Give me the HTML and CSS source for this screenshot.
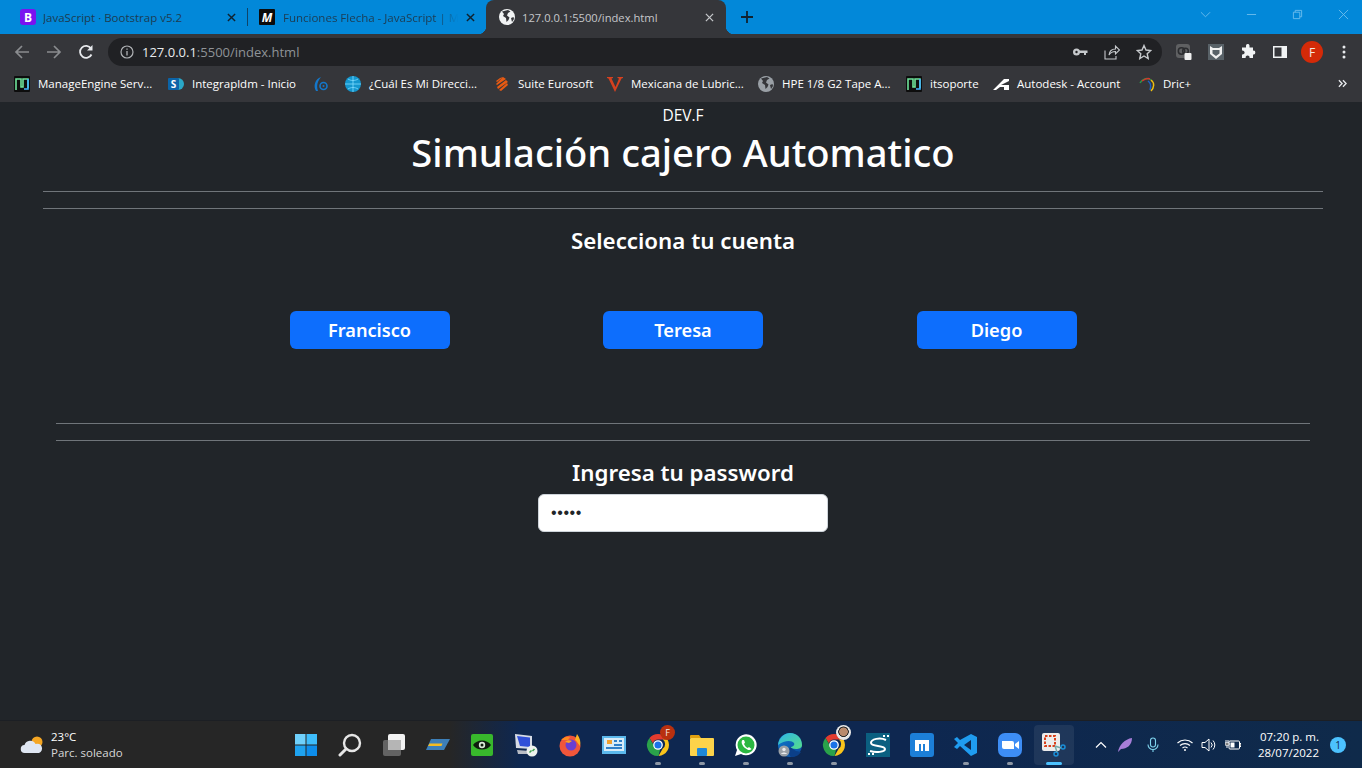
FILE: index.html
```html
<!DOCTYPE html>
<html lang="es">
<head>
<meta charset="utf-8">
<title>127.0.0.1:5500/index.html</title>
<link rel="stylesheet" href="styles.css">
</head>
<body>
<svg class="defs" width="0" height="0">
  <defs>
    <linearGradient id="edge-a" x1="0" y1="0" x2="1" y2="1"><stop offset="0" stop-color="#2fb5e8"/><stop offset="1" stop-color="#55dd8a"/></linearGradient>
    <linearGradient id="edge-b" x1="0" y1="0" x2="1" y2="1"><stop offset="0" stop-color="#0f7ad0"/><stop offset="1" stop-color="#0b4a9a"/></linearGradient>
  </defs>
  <symbol id="globe" viewBox="0 0 16 16"><circle cx="8" cy="8" r="8" fill="currentColor"/><path d="M3 2.500 5 5l-1 2 3 2 .5 4 2-2 1-2.500L8 6.500 9 4l2.500-1.500L9 1zM12 9l2.500-1L15 10l-2 3z" fill="#35363a"/></symbol>
  <symbol id="sn" viewBox="0 0 16 16"><rect width="16" height="16" rx="1" fill="#0d0d0d"/><path d="M2 14V3h5v8h2V3h5v9" fill="none" stroke="#6fe39a" stroke-width="1.600"/><path d="M14 3v10h-4" fill="none" stroke="#44b4ff" stroke-width="1.600"/></symbol>
  <symbol id="chrome" viewBox="0 0 24 24"><path d="M12 1a11 11 0 0 1 9.500 5.500H12a5.500 5.500 0 0 0-5.200 3.800L3.500 5A11 11 0 0 1 12 1z" fill="#e33b2e"/><path d="M21.500 6.500A11 11 0 0 1 12.500 23l4.300-7.500a5.500 5.500 0 0 0 0-9z" fill="#f9c41b"/><path d="M12.500 23A11 11 0 0 1 3.500 5l4 7a5.500 5.500 0 0 0 6.800 3.500z" fill="#2aa24a"/><circle cx="12" cy="12" r="4.200" fill="#1a73e8" stroke="#fff" stroke-width="1.300"/></symbol>
</svg>

<header class="browser">
  <div class="tabstrip">
    <div class="tab">
      <svg class="fav" viewBox="0 0 16 16"><rect width="16" height="16" rx="3" fill="#7a12f0"/><text x="8" y="12.500" class="fav-b">B</text></svg>
      <span class="tab-title">JavaScript · Bootstrap v5.2</span>
      <svg class="tab-x" viewBox="0 0 10 10"><path d="M1 1l8 8M9 1l-8 8" stroke="currentColor" stroke-width="1.600"/></svg>
    </div>
    <div class="tab tab-sep">
      <svg class="fav" viewBox="0 0 16 16"><rect width="16" height="16" rx="1" fill="#0b0b0b"/><text x="8" y="12.500" class="fav-m">M</text></svg>
      <span class="tab-title tab-fade">Funciones Flecha - JavaScript | MDN</span>
      <svg class="tab-x" viewBox="0 0 10 10"><path d="M1 1l8 8M9 1l-8 8" stroke="currentColor" stroke-width="1.600"/></svg>
    </div>
    <div class="tab tab-active">
      <svg class="fav" viewBox="0 0 16 16"><use href="#globe"/></svg>
      <span class="tab-title">127.0.0.1:5500/index.html</span>
      <svg class="tab-x" viewBox="0 0 10 10"><path d="M1 1l8 8M9 1l-8 8" stroke="currentColor" stroke-width="1.400"/></svg>
    </div>
    <svg class="new-tab" viewBox="0 0 12 12"><path d="M6 0v12M0 6h12" stroke="#10222f" stroke-width="1.800"/></svg>
    <div class="win-controls">
      <svg viewBox="0 0 12 12"><path d="M1 3.500l5 5 5-5" fill="none" stroke="currentColor"/></svg>
      <svg viewBox="0 0 12 12"><path d="M1 6h10" stroke="currentColor"/></svg>
      <svg viewBox="0 0 12 12"><path d="M1.500 3.500h7v7h-7zM3.500 3.500v-2h7v7h-2" fill="none" stroke="currentColor"/></svg>
      <svg viewBox="0 0 12 12"><path d="M1 1l10 10M11 1L1 11" stroke="currentColor"/></svg>
    </div>
  </div>

  <div class="toolbar">
    <svg class="nav dim" viewBox="0 0 16 16"><path d="M15 8H2M8 2 2 8l6 6" fill="none" stroke="currentColor" stroke-width="1.700"/></svg>
    <svg class="nav dim" viewBox="0 0 16 16"><path d="M1 8h13M8 2l6 6-6 6" fill="none" stroke="currentColor" stroke-width="1.700"/></svg>
    <svg class="nav" viewBox="0 0 16 16"><path d="M13.500 10.500A6 6 0 1 1 13 4.500" fill="none" stroke="currentColor" stroke-width="1.800"/><path d="M14.500 1v5.500H9z" fill="currentColor"/></svg>
    <div class="omnibox">
      <svg class="info" viewBox="0 0 14 14"><circle cx="7" cy="7" r="6" fill="none" stroke="currentColor" stroke-width="1.200"/><path d="M7 6v4.500M7 3.500v1.300" stroke="currentColor" stroke-width="1.300"/></svg>
      <span class="url"><span class="url-host">127.0.0.1</span>:5500/index.html</span>
      <span class="spacer"></span>
      <svg class="omni-icon" viewBox="0 0 16 16"><circle cx="4.500" cy="8" r="3.500" fill="currentColor"/><path d="M7 6.500h8.500V9H14v2h-2V9H7z" fill="currentColor"/><circle cx="4.500" cy="8" r="1.200" fill="#202124"/></svg>
      <svg class="omni-icon" viewBox="0 0 16 16"><path d="M1 6.500V15h11v-3M5 11c.5-4 3-6 6.500-6V2L15.500 6l-4 4V7.500C9 7.500 6.500 8.500 5 11z" fill="none" stroke="currentColor" stroke-width="1.100"/></svg>
      <svg class="omni-icon" viewBox="0 0 16 16"><path d="M8 1.500l2 4.500 4.800.5-3.600 3.200 1 4.800L8 12l-4.200 2.500 1-4.800L1.200 6.500 6 6z" fill="none" stroke="currentColor" stroke-width="1.400"/></svg>
    </div>
    <div class="extensions">
      <svg class="ext" viewBox="0 0 16 16"><rect width="14" height="14" rx="3" fill="#5f6062"/><circle cx="5.500" cy="7" r="3.200" fill="none" stroke="#2b2c2f" stroke-width="1.500"/><circle cx="9.500" cy="7" r="2.800" fill="none" stroke="#2b2c2f" stroke-width="1.500"/><rect x="8.500" y="9" width="7" height="7" rx="1" fill="#f0f0f0"/></svg>
      <svg class="ext" viewBox="0 0 16 16"><rect width="16" height="16" fill="#596268"/><path d="M2 2l3 2h6l3-2v8l-6 5-6-5z" fill="#f1f1f1"/><path d="M4.500 6h7v3.500L8 12 4.500 9.500z" fill="#596268"/></svg>
      <svg class="ext" viewBox="0 0 16 16"><path d="M6 1.500a1.800 1.800 0 0 1 3.500 0V3.500H13v3.200a1.900 1.900 0 1 1 0 3.700V14H9.500a2 2 0 1 0-3.800 0H2v-3.600a2 2 0 1 0 0-3.800V3.500h4z" fill="#f1f3f4"/></svg>
      <svg class="ext" viewBox="0 0 16 16"><rect x="1" y="2" width="14" height="12" fill="#f1f3f4"/><rect x="2.500" y="3.500" width="7" height="9" fill="#35363a"/></svg>
      <span class="avatar">F</span>
      <svg class="ext" viewBox="0 0 16 16"><circle cx="8" cy="3" r="1.500" fill="#e8eaed"/><circle cx="8" cy="8" r="1.500" fill="#e8eaed"/><circle cx="8" cy="13" r="1.500" fill="#e8eaed"/></svg>
    </div>
  </div>

  <nav class="bookmarks">
    <a class="bm bm-1"><svg class="bm-icon" viewBox="0 0 16 16"><use href="#sn"/></svg>ManageEngine Serv...</a>
    <a class="bm bm-2"><svg class="bm-icon" viewBox="0 0 16 16"><circle cx="10" cy="8" r="6" fill="#2aa8c8"/><rect y="2" width="11" height="12" rx="1" fill="#0b64a8"/><text x="5.500" y="12" class="bm-s">S</text></svg>Integrapldm - Inicio</a>
    <a class="bm bm-3"><svg class="bm-icon" viewBox="0 0 16 16"><path d="M3 15C0 10 2 3 8 1 5 5 3 9 5 15z" fill="#1477c9"/><circle cx="10.500" cy="10" r="3.500" fill="none" stroke="#1477c9" stroke-width="1.600"/><circle cx="10.500" cy="10" r="1" fill="#1477c9"/></svg></a>
    <a class="bm bm-4"><svg class="bm-icon" viewBox="0 0 16 16"><circle cx="8" cy="8" r="8" fill="#1497cf"/><path d="M8 0v16M0 8h16M3 3c3 2 7 2 10 0M3 13c3-2 7-2 10 0" stroke="#7fdcff" fill="none" stroke-width=".8"/></svg>¿Cuál Es Mi Direcci...</a>
    <a class="bm bm-5"><svg class="bm-icon" viewBox="0 0 16 16"><path d="M9 1l3 2-9 6-1-1zM12 4l2 2-10 7-1-2zM13 7l1 2-7 6-2-1zM6 2l3-1-6 5-1-1z" fill="#e85a12"/></svg>Suite Eurosoft</a>
    <a class="bm bm-6"><svg class="bm-icon" viewBox="0 0 16 16"><path d="M0 1h6v1L4.500 2.500 8.500 11 12 2.500 10.500 2V1H16v1l-1.500.5L8 16 1.500 2.500 0 2z" fill="#d6411f"/></svg>Mexicana de Lubric...</a>
    <a class="bm bm-7"><svg class="bm-icon globe-grey" viewBox="0 0 16 16"><use href="#globe"/></svg>HPE 1/8 G2 Tape A...</a>
    <a class="bm bm-8"><svg class="bm-icon" viewBox="0 0 16 16"><use href="#sn"/></svg>itsoporte</a>
    <a class="bm bm-9"><svg class="bm-icon" viewBox="0 0 16 16"><path d="M0 14 11 3h5v2L8 9h8v5h-5v-3H7l-4 3z" fill="#fff"/></svg>Autodesk - Account</a>
    <a class="bm bm-10"><svg class="bm-icon" viewBox="0 0 16 16"><path d="M1 7c2-4 7-6 11-3" fill="none" stroke="#2a9a4a" stroke-width="1.500"/><path d="M3 5c3-2 6-3 8-2" fill="none" stroke="#d8342c" stroke-width="1.500"/><path d="M12 4c4 3 3 8 0 11" fill="none" stroke="#f0c010" stroke-width="1.500"/><path d="M9 5c3 2 3 6 2 9" fill="none" stroke="#1a60c8" stroke-width="1.500"/></svg>Dric+</a>
    <span class="spacer"></span>
    <svg class="bm-more" viewBox="0 0 10 10"><path d="M1 1.500L4.500 5 1 8.500M5.500 1.500L9 5 5.500 8.500" fill="none" stroke="#e8eaed" stroke-width="1.500"/></svg>
  </nav>
</header>

<main class="page">
  <p class="brand">DEV.F</p>
  <h1 class="title">Simulación cajero Automatico</h1>
  <hr class="rule rule-wide rule-first">
  <hr class="rule rule-wide rule-second">
  <h2 class="heading heading-account">Selecciona tu cuenta</h2>
  <div class="accounts">
    <button class="account" type="button">Francisco</button>
    <button class="account" type="button">Teresa</button>
    <button class="account" type="button">Diego</button>
  </div>
  <hr class="rule rule-narrow rule-third">
  <hr class="rule rule-narrow rule-second">
  <h2 class="heading heading-pass">Ingresa tu password</h2>
  <input class="password" type="password" value="12345" aria-label="password">
</main>

<footer class="taskbar">
  <div class="weather">
    <svg class="weather-icon" viewBox="0 0 24 20"><circle cx="17" cy="7" r="5.500" fill="#f5a623"/><path d="M5 18a4 4 0 0 1-.5-8A6 6 0 0 1 15.500 9 4.500 4.500 0 0 1 19 18z" fill="#dfe6f2"/></svg>
    <div class="weather-text"><span class="temp">23°C</span><span class="cond">Parc. soleado</span></div>
  </div>
  <div class="apps">
    <span class="app"><svg viewBox="0 0 24 24"><path d="M1 1h10.500v10.500H1z" fill="#6fd0fb"/><path d="M12.500 1H23v10.500H12.500z" fill="#3ebdfb"/><path d="M1 12.500h10.500V23H1z" fill="#1fa3f0"/><path d="M12.500 12.500H23V23H12.500z" fill="#0d8deb"/></svg></span>
    <span class="app"><svg viewBox="0 0 24 24"><circle cx="14" cy="10" r="8" fill="none" stroke="#e6e6e6" stroke-width="2.400"/><path d="M8 16l-6 6" stroke="#e6e6e6" stroke-width="3" stroke-linecap="round"/></svg></span>
    <span class="app"><svg viewBox="0 0 24 24"><rect x="6" y="1" width="17" height="16" rx="2" fill="#f2f2f2"/><rect x="1" y="7" width="18" height="16" rx="2" fill="#6a6a6a" fill-opacity=".9"/><rect x="6" y="7" width="13" height="10" fill="#b5b5b5"/></svg></span>
    <span class="app"><svg viewBox="0 0 24 24"><path d="M5 6h19l-6 11H0z" fill="#3d7fb8"/><path d="M3.500 10.500h13l-1 2.500H2z" fill="#f5bc20"/></svg></span>
    <span class="app"><svg viewBox="0 0 24 24"><rect x="1" y="1" width="22" height="22" rx="2" fill="#38b82c"/><path d="M3 12c4-6 14-6 18 0-4 6-14 6-18 0z" fill="#0e1a0e"/><circle cx="12" cy="12" r="3.200" fill="#d8e8d8"/><circle cx="12" cy="12" r="1.500" fill="#0e1a0e"/></svg></span>
    <span class="app"><svg viewBox="0 0 24 24"><path d="M1 1l17 2v13L2 15z" fill="#d6dbe6"/><path d="M3 3l13 1.500v9.500L6 13z" fill="#2f4fd8"/><path d="M3 17l13 1v3H4z" fill="#b8bcc4"/><circle cx="18" cy="18" r="5.500" fill="#eef2ee"/><path d="M15.500 19.500l2-2M18.500 18l2-2" stroke="#3aa14a" stroke-width="1.500"/></svg></span>
    <span class="app"><svg viewBox="0 0 24 24"><circle cx="12" cy="13" r="10.500" fill="#f0563a"/><path d="M19 1c3 4 4 8 3 12-2-2-3-5-5-6z" fill="#ffb01f"/><path d="M3 7c3-3 6-4 9-3l-2 3z" fill="#ff8a1f"/><circle cx="13" cy="12" r="5.500" fill="#6a3fd0"/><path d="M7 9c2-2 5-2 7-1l-3 2z" fill="#ffa01f"/></svg></span>
    <span class="app"><svg viewBox="0 0 24 24"><rect y="3" width="24" height="18" fill="#5bb8ec"/><rect x="2" y="5" width="20" height="13" fill="#d8ecf8"/><path d="M5 7h5v4H5z" fill="#f0a030"/><path d="M12 7h3v2h-3zM17 7h3v2h-3zM12 11h8v2h-8zM4 14h16v2H4z" fill="#3080c8"/></svg></span>
    <span class="app has-pill"><svg viewBox="0 0 24 24"><use href="#chrome"/></svg><span class="app-badge">F</span></span>
    <span class="app has-pill"><svg viewBox="0 0 24 24"><path d="M0 3a1 1 0 0 1 1-1h8l2 3h-11z" fill="#e0a010"/><rect y="5" width="24" height="18" rx="1" fill="#fcd34a"/><rect x="7" y="15" width="10" height="8" rx="1" fill="#1e88d8"/></svg></span>
    <span class="app has-pill"><svg viewBox="0 0 24 24"><path d="M1 23l2-6a10.500 10.500 0 1 1 4 4z" fill="#fff"/><circle cx="12" cy="12" r="8.500" fill="#2bb741"/><path d="M8.500 7c-2 2 0 6 2.500 8s5 3 6.500 1l-2.500-2-1.300 1c-2-1-3-2.500-3.700-4L11 9.500 10 7z" fill="#fff"/></svg></span>
    <span class="app has-pill"><svg viewBox="0 0 24 24"><circle cx="12" cy="12" r="12" fill="url(#edge-b)"/><path d="M0 12C1 4 7 0 12 0c7 0 12 5 12 12 0 3-3 4-6 4-3 0-5-1-6-2 3 0 5-2 4-4-2-3-10-3-16 2z" fill="url(#edge-a)"/><path d="M13 24c-2-2-3-6-1-10l6 4 5 1c-2 3-5 5-10 5z" fill="#0b3f88"/><circle cx="6" cy="18" r="5.500" fill="#9aa0a6"/><circle cx="6" cy="16.500" r="1.700" fill="#e8eaed"/><path d="M3 21c1-2 5-2 6 0z" fill="#e8eaed"/></svg></span>
    <span class="app has-pill"><svg viewBox="0 0 24 24"><use href="#chrome"/></svg><span class="app-photo"></span></span>
    <span class="app"><svg viewBox="0 0 24 24"><rect width="24" height="24" fill="#0b5f80"/><path d="M20 7C14 4 5 6 5 10c0 4 14 2 14 6 0 3-9 4-15 2" fill="none" stroke="#fff" stroke-width="2"/><path d="M17 2h2v2h-2zM21 2h2v2h-2zM2 20h2v2H2zM6 20h2v2H6z" fill="#fff"/></svg></span>
    <span class="app"><svg viewBox="0 0 24 24"><rect width="24" height="24" rx="3" fill="#1c7fd8"/><path d="M5 18V7h14v11h-4v-7h-2v7h-2v-7H9v7z" fill="#fff"/></svg></span>
    <span class="app has-pill"><svg viewBox="0 0 24 24"><path d="M17 1l6 3v16l-6 3L6 13l-3 3-3-2 4-4-4-4 3-2 3 3z" fill="#1f9cf0"/><path d="M17 7v10l-7-5z" fill="#0e2a52"/></svg></span>
    <span class="app has-pill"><svg viewBox="0 0 24 24"><rect width="24" height="24" rx="7" fill="#3d8df5"/><path d="M4 8h10a2 2 0 0 1 2 2v6H6a2 2 0 0 1-2-2z" fill="#fff"/><path d="M17 11l4-3v8l-4-3z" fill="#fff"/></svg></span>
    <span class="app app-active"><svg viewBox="0 0 24 24"><rect width="18" height="18" rx="2" fill="#ececec"/><path d="M3 3h10v10H3z" fill="none" stroke="#d8401c" stroke-width="2" stroke-dasharray="2.500 1.500"/><circle cx="21" cy="14" r="2" fill="none" stroke="#1a8fd8" stroke-width="1.500"/><circle cx="14" cy="21" r="2" fill="none" stroke="#1a8fd8" stroke-width="1.500"/><path d="M13 13l6 2M13 13l2 6" stroke="#7aa" stroke-width="1.500"/></svg></span>
  </div>
  <div class="tray">
    <svg class="tray-chev" viewBox="0 0 12 12"><path d="M1 8.500L6 3.500l5 5" fill="none" stroke="#fff" stroke-width="1.200"/></svg>
    <svg class="tray-icon tray-feather" viewBox="0 0 16 16"><path d="M1 15C2 8 8 2 15 1c0 7-5 11-11 11z" fill="#a77ed8"/></svg>
    <svg class="tray-icon tray-mic" viewBox="0 0 16 16"><rect x="5.500" y="1" width="5" height="9" rx="2.500" fill="none" stroke="#7fd4ee" stroke-width="1.100"/><path d="M3 7.500a5 5 0 0 0 10 0M8 12.500V15" fill="none" stroke="#7fd4ee" stroke-width="1.100"/></svg>
    <svg class="tray-icon tray-wifi" viewBox="0 0 16 16"><path d="M.5 6a11 11 0 0 1 15 0M3 8.500a7.500 7.500 0 0 1 10 0M5.500 11a4 4 0 0 1 5 0" fill="none" stroke="#fff" stroke-width="1.100"/><circle cx="8" cy="13" r="1" fill="#fff"/></svg>
    <svg class="tray-icon tray-vol" viewBox="0 0 16 16"><path d="M1 5.500h3L8 2v12l-4-3.500H1z" fill="none" stroke="#fff"/><path d="M10 5.500a3.500 3.500 0 0 1 0 5M12 3.500a6.500 6.500 0 0 1 0 9" fill="none" stroke="#fff"/></svg>
    <svg class="tray-icon tray-bat" viewBox="0 0 16 16"><rect x="4" y="4" width="10.500" height="8" rx="1" fill="none" stroke="#fff"/><rect x="5.500" y="5.500" width="4" height="5" fill="#fff"/><path d="M15 6.500h1v3h-1zM1 3v3M3 3v3M0 6h4v2H0zM2 8v3" stroke="#fff"/></svg>
    <div class="clock"><span>07:20 p. m.</span><span>28/07/2022</span></div>
    <span class="notif">1</span>
  </div>
</footer>
</body>
</html>
```
FILE: styles.css
```css
* { box-sizing: border-box; }
html, body { margin: 0; height: 100%; }
body {
  width: 1362px;
  height: 768px;
  overflow: hidden;
  display: flex;
  flex-direction: column;
  background: #212529;
  font-family: "Open Sans", "Noto Sans", sans-serif;
  color: #fff;
}
.defs { position: absolute; }
.spacer { flex: 1; }

/* browser chrome */
.browser { flex: none; height: 102px; background: #35363a; }
.tabstrip {
  height: 34px;
  display: flex;
  align-items: stretch;
  padding-left: 8px;
  background: #0288d9;
}
.tab {
  width: 239px;
  display: flex;
  align-items: center;
  padding: 0 4px 0 12px;
  color: #1d3c52;
  font-size: 11.500px;
  position: relative;
}
.tab-sep::before {
  content: "";
  position: absolute;
  left: 0;
  top: 8px;
  bottom: 8px;
  width: 1px;
  background: #0f4468;
}
.tab-active {
  width: 240px;
  padding-left: 13px;
  padding-right: 5px;
  font-size: 11.200px;
  background: #35363a;
  border-radius: 8px 8px 0 0;
  color: #c5c7ca;
}
.tab-active::before, .tab-active::after {
  content: "";
  position: absolute;
  bottom: 0;
  width: 8px;
  height: 8px;
}
.tab-active::before {
  left: -8px;
  background: radial-gradient(circle at 0 0, transparent 8px, #35363a 8.500px);
}
.tab-active::after {
  right: -8px;
  background: radial-gradient(circle at 100% 0, transparent 8px, #35363a 8.500px);
}
.fav { width: 16px; height: 16px; flex: none; margin-right: 7px; color: #f1f3f4; }
.tab-sep .fav { margin-right: 8px; }
.fav-b { font: 700 12px "Open Sans", sans-serif; fill: #fff; text-anchor: middle; }
.fav-m { font: italic 700 12px "Open Sans", sans-serif; fill: #fff; text-anchor: middle; }
.tab-title { flex: 1; white-space: nowrap; overflow: hidden; }
.tab-fade { mask-image: linear-gradient(to right, #000 88%, transparent); }
.tab-x { width: 9px; height: 9px; flex: none; margin: 0 7px 0 8px; color: #10222f; }
.tab-active .tab-x { color: #c5c7ca; }
.new-tab { width: 12px; height: 12px; align-self: center; margin-left: 15px; }
.win-controls {
  margin-left: auto;
  display: flex;
  align-items: center;
  gap: 35px;
  padding: 0 13px 6px 0;
  color: #6cbcec;
}
.win-controls svg { width: 11px; height: 11px; }

.toolbar {
  height: 32px;
  padding-top: 4px;
  display: flex;
  align-items: center;
  padding-left: 14px;
  gap: 16px;
}
.nav { width: 16px; height: 16px; flex: none; color: #e8eaed; }
.nav.dim { color: #8a8c8f; }
.omnibox {
  width: 1054px;
  height: 28px;
  margin-left: -2px;
  display: flex;
  align-items: center;
  background: #202124;
  border-radius: 14px;
  padding: 0 10px 0 12px;
  color: #9aa0a6;
}
.info { width: 14px; height: 14px; margin-right: 8px; color: #b0b3b6; }
.url { font-size: 13px; color: #8f9397; }
.url-host { color: #e8eaed; }
.omni-icon { width: 16px; height: 16px; margin-left: 16px; color: #c6c9cc; }
.extensions { display: flex; align-items: center; gap: 16px; margin-left: -2px; }
.ext { width: 16px; height: 16px; flex: none; }
.avatar {
  width: 22px;
  height: 22px;
  margin: 0 -3px;
  border-radius: 50%;
  background: #d42a08;
  color: #f4e8e0;
  font-size: 12px;
  display: flex;
  align-items: center;
  justify-content: center;
}

.bookmarks {
  height: 36px;
  display: flex;
  align-items: center;
  padding: 0 15px 1px 14px;
}
.bm {
  flex: none;
  display: flex;
  align-items: center;
  gap: 8px;
  font-size: 11.500px;
  color: #fff;
  white-space: nowrap;
}
.bm-icon { width: 16px; height: 16px; flex: none; }
.globe-grey { color: #9aa0a6; }
.bm-s { font: 700 10px "Open Sans", sans-serif; fill: #fff; text-anchor: middle; }
.bm-1 { width: 154px; }
.bm-2 { width: 145px; }
.bm-3 { width: 32px; }
.bm-4 { width: 149px; }
.bm-5 { width: 113px; }
.bm-6 { width: 151px; }
.bm-7 { width: 148px; }
.bm-8 { width: 87px; }
.bm-9 { width: 146px; }
.bm-more { width: 9px; height: 9px; }

/* page */
.page {
  flex: 1;
  display: flex;
  flex-direction: column;
  align-items: center;
  padding: 1px 0 0 4px;
  background: #212529;
}
.brand { margin: 0; font-size: 15.500px; line-height: 24px; }
.title { margin: 1px 0 0; font-family: "Noto Sans", sans-serif; font-size: 38.200px; line-height: 48px; font-weight: 500; }
.rule { border: 0; border-top: 1px solid #70757a; margin: 0; height: 0; flex: none; }
.rule-wide { width: 1280px; }
.rule-narrow { width: 1254px; }
.rule-first { margin-top: 15px; }
.rule-second { margin-top: 16px; }
.rule-third { margin-top: 74px; }
.heading { margin: 0; font-family: "Noto Sans", sans-serif; font-size: 22.300px; line-height: 29px; font-weight: 600; }
.heading-account { margin-top: 17px; }
.heading-pass { margin-top: 17px; }
.accounts {
  display: grid;
  grid-template-columns: repeat(3, 313.5px);
  justify-items: center;
  margin-top: 56px;
}
.account {
  width: 160px;
  height: 38px;
  border: 0;
  border-radius: 6px;
  background: #0d6efd;
  color: #fff;
  font: 600 18.200px "Noto Sans", sans-serif;
  padding: 0;
}
.password {
  width: 290px;
  height: 38px;
  margin-top: 7px;
  border: 1px solid #ced4da;
  border-radius: 6px;
  background: #fff;
  padding: 0 12px;
  font-size: 16px;
  letter-spacing: .6px;
  color: #212529;
}

/* taskbar */
.taskbar {
  flex: none;
  height: 48px;
  display: flex;
  align-items: center;
  background: linear-gradient(to right, #262626 0, #262626 450px, #0e2750 520px, #0e2750 900px, #0f2a4a 1362px);
  border-top: 1px solid #1c1f24;
}
.weather { width: 284px; flex: none; display: flex; align-items: center; padding-left: 20px; gap: 7px; }
.weather-icon { width: 24px; height: 20px; }
.weather-text { display: flex; flex-direction: column; font-size: 11.500px; line-height: 16px; }
.cond { color: #d8d8d8; }
.apps { display: flex; flex: none; }
.app {
  width: 44px;
  height: 40px;
  display: flex;
  align-items: center;
  justify-content: center;
  position: relative;
}
.app > svg { width: 24px; height: 24px; }
.has-pill::after, .app-active::after {
  content: "";
  position: absolute;
  left: 50%;
  bottom: 0;
  width: 6px;
  height: 3px;
  margin-left: -3px;
  border-radius: 2px;
  background: #8d97a5;
}
.app-active { background: rgba(255, 255, 255, .07); border-radius: 4px; width: 40px; margin-left: 2px; }
.app-active::after { width: 16px; margin-left: -8px; background: #4cc2ff; }
.app-badge, .app-photo {
  position: absolute;
  top: 0;
  right: 5px;
  width: 15px;
  height: 15px;
  border-radius: 50%;
}
.app-badge {
  background: #b8300f;
  color: #f4e8e0;
  font-size: 9px;
  line-height: 15px;
  text-align: center;
}
.app-photo { background: radial-gradient(circle at 50% 45%, #b98a6c 0 4px, #2b2b2b 4.500px 5px, #e8e8e8 5.500px); }

.tray { flex: 1; display: flex; align-items: center; padding-left: 21px; color: #fff; }
.tray-chev { width: 12px; height: 12px; }
.tray-icon { width: 16px; height: 16px; flex: none; }
.tray-feather { margin-left: 10px; }
.tray-mic { margin-left: 12px; }
.tray-wifi { margin-left: 16px; }
.tray-vol { margin-left: 8px; }
.tray-bat { margin-left: 8px; }
.clock {
  display: flex;
  flex-direction: column;
  align-items: flex-end;
  width: 68px;
  margin-left: 10px;
  font-size: 11.500px;
  line-height: 16px;
}
.notif {
  width: 16px;
  height: 16px;
  margin-left: 11px;
  border-radius: 50%;
  background: #4cc2ff;
  color: #0e2750;
  font-size: 10px;
  line-height: 16px;
  text-align: center;
}
```
